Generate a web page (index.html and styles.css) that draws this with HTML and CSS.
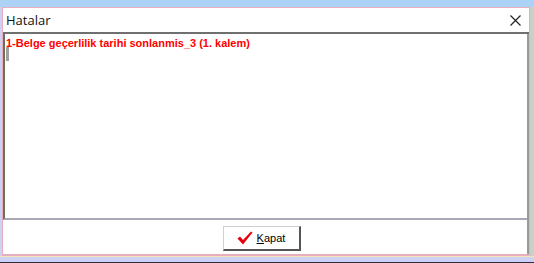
FILE: index.html
```html
<!DOCTYPE html>
<html lang="tr">
<head>
    <meta charset="UTF-8">
    <title>Hatalar</title>
    <link rel="stylesheet" href="styles.css">
</head>
<body>
    <div class="screen">
        <div class="desk-top"></div>
        <div class="desk-row">
            <div class="dialog">
                <div class="titlebar">
                    <span class="title">Hatalar</span>
                    <svg class="close" width="11" height="11" viewBox="0 0 11 11">
                        <path d="M0.5 0.5 L10.5 10.5 M10.5 0.5 L0.5 10.5" stroke="#222" stroke-width="1.2" fill="none"/>
                    </svg>
                </div>
                <div class="body">
                    <div class="memo">
                        <div class="msg">1-Belge geçerlilik tarihi sonlanmis_3 (1. kalem)</div>
                        <div class="caret"></div>
                    </div>
                    <div class="footer">
                        <button class="btn">
                            <svg width="16" height="14" viewBox="0 0 16 14">
                                <path d="M0.5 7.5 L3 5.5 L6 9 L14 0.5 L15.5 1.5 L6 13.5 Z" fill="#e8000c"/>
                            </svg>
                            <span><u>K</u>apat</span>
                        </button>
                    </div>
                </div>
            </div>
            <div class="desk-side"></div>
        </div>
        <div class="desk-bottom"></div>
    </div>
</body>
</html>
```
FILE: styles.css
```css
body {
    margin: 0;
    font-family: "Liberation Sans", Arial, sans-serif;
}
.screen {
    width: 534px;
    height: 263px;
    background-color: #cfd0f5;
    display: flex;
    flex-direction: column;
    overflow: hidden;
}
.desk-top {
    height: 7px;
    background-color: #acd3f6;
}
.desk-row {
    display: flex;
    padding-left: 2px;
    background-color: #cfd0f5;
}
.desk-side {
    width: 4px;
    background-color: #c9d0c6;
}
.dialog {
    width: 526px;
    height: 246px;
    border: 1px solid #e7aebd;
    border-bottom-width: 2px;
    background-color: #ffffff;
    display: flex;
    flex-direction: column;
}
.titlebar {
    height: 24px;
    display: flex;
    align-items: center;
    justify-content: space-between;
    padding: 0 8px 0 3px;
    border-bottom: 2px solid #707070;
}
.title {
    font-family: "Open Sans", "Noto Sans", sans-serif;
    font-size: 13px;
    color: #111;
}
.close {
    display: block;
}
.body {
    flex: 1;
    display: flex;
    flex-direction: column;
    border-right: 2px solid #9a9a9a;
}
.memo {
    height: 178px;
    border-left: 2px solid #6f6f5f;
    border-bottom: 2px solid #a8a8b4;
    padding: 3px 1px;
    position: relative;
}
.msg {
    color: #ff0000;
    font-weight: bold;
    font-size: 11px;
    line-height: 13px;
}
.caret {
    position: absolute;
    left: 1px;
    top: 13px;
    width: 3px;
    height: 14px;
    background-color: #a0a0a0;
}
.footer {
    flex: 1;
    display: flex;
    justify-content: center;
    padding-top: 6px;
    padding-right: 7px;
}
.btn {
    width: 78px;
    height: 25px;
    background-color: #ffffff;
    border: 1px solid #d0d0d0;
    border-right: 2px solid #555;
    border-bottom: 2px solid #555;
    display: flex;
    align-items: center;
    justify-content: center;
    gap: 4px;
    padding: 0;
    font-family: "Liberation Sans", Arial, sans-serif;
    font-size: 11px;
    color: #000;
}
.desk-bottom {
    flex: 1;
    background: linear-gradient(#f1e6b6 0, #f1e6b6 1px, #cfd0f5 1px, #cfd0f5 6px, #2c2c3a 6px);
}
```
